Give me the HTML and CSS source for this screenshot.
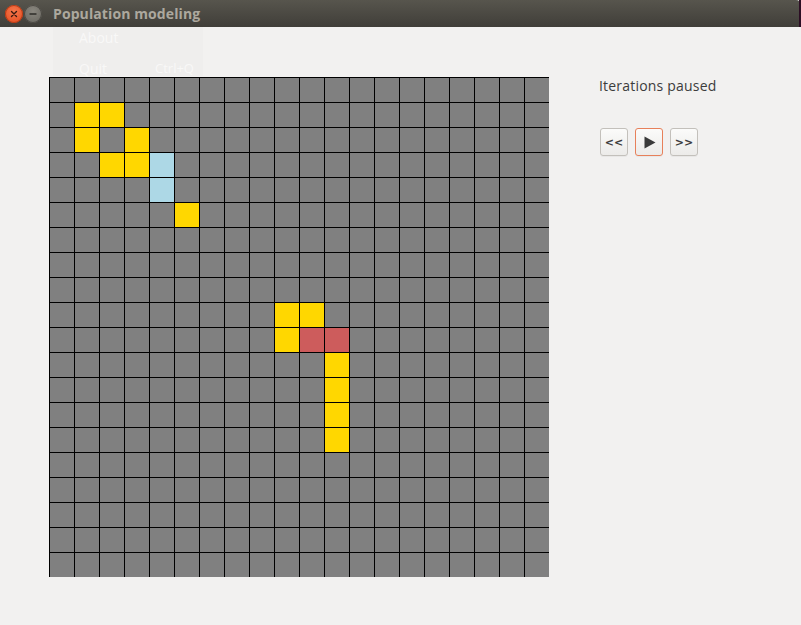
FILE: index.html
```html
<!DOCTYPE html>
<html>
<head>
<meta charset="utf-8">
<title>Population modeling</title>
<link rel="stylesheet" href="styles.css">
</head>
<body>
<div class="window">
  <div class="titlebar">
    <div class="wbtns">
      <span class="wbtn close"><svg width="8" height="8" viewBox="0 0 8 8"><path d="M1.5 1.5L6.5 6.5M6.5 1.5L1.5 6.5" stroke="#3a1a10" stroke-width="1.4" stroke-linecap="round"/></svg></span>
      <span class="wbtn min"><svg width="8" height="8" viewBox="0 0 8 8"><path d="M1 4H7" stroke="#2e2d29" stroke-width="1.4" stroke-linecap="round"/></svg></span>
    </div>
    <div class="title">Population modeling</div>
    <div class="edge"></div>
  </div>
  <div class="content">
    <div class="ghost-menu">
      <div class="gm-item">About</div>
      <div class="gm-item"><span>Quit</span><span class="gm-acc">Ctrl+Q</span></div>
    </div>
    <div class="grid">
<i></i><i></i><i></i><i></i><i></i><i></i><i></i><i></i><i></i><i></i><i></i><i></i><i></i><i></i><i></i><i></i><i></i><i></i><i></i><i></i>
<i></i><i class="y"></i><i class="y"></i><i></i><i></i><i></i><i></i><i></i><i></i><i></i><i></i><i></i><i></i><i></i><i></i><i></i><i></i><i></i><i></i><i></i>
<i></i><i class="y"></i><i></i><i class="y"></i><i></i><i></i><i></i><i></i><i></i><i></i><i></i><i></i><i></i><i></i><i></i><i></i><i></i><i></i><i></i><i></i>
<i></i><i></i><i class="y"></i><i class="y"></i><i class="b"></i><i></i><i></i><i></i><i></i><i></i><i></i><i></i><i></i><i></i><i></i><i></i><i></i><i></i><i></i><i></i>
<i></i><i></i><i></i><i></i><i class="b"></i><i></i><i></i><i></i><i></i><i></i><i></i><i></i><i></i><i></i><i></i><i></i><i></i><i></i><i></i><i></i>
<i></i><i></i><i></i><i></i><i></i><i class="y"></i><i></i><i></i><i></i><i></i><i></i><i></i><i></i><i></i><i></i><i></i><i></i><i></i><i></i><i></i>
<i></i><i></i><i></i><i></i><i></i><i></i><i></i><i></i><i></i><i></i><i></i><i></i><i></i><i></i><i></i><i></i><i></i><i></i><i></i><i></i>
<i></i><i></i><i></i><i></i><i></i><i></i><i></i><i></i><i></i><i></i><i></i><i></i><i></i><i></i><i></i><i></i><i></i><i></i><i></i><i></i>
<i></i><i></i><i></i><i></i><i></i><i></i><i></i><i></i><i></i><i></i><i></i><i></i><i></i><i></i><i></i><i></i><i></i><i></i><i></i><i></i>
<i></i><i></i><i></i><i></i><i></i><i></i><i></i><i></i><i></i><i class="y"></i><i class="y"></i><i></i><i></i><i></i><i></i><i></i><i></i><i></i><i></i><i></i>
<i></i><i></i><i></i><i></i><i></i><i></i><i></i><i></i><i></i><i class="y"></i><i class="r"></i><i class="r"></i><i></i><i></i><i></i><i></i><i></i><i></i><i></i><i></i>
<i></i><i></i><i></i><i></i><i></i><i></i><i></i><i></i><i></i><i></i><i></i><i class="y"></i><i></i><i></i><i></i><i></i><i></i><i></i><i></i><i></i>
<i></i><i></i><i></i><i></i><i></i><i></i><i></i><i></i><i></i><i></i><i></i><i class="y"></i><i></i><i></i><i></i><i></i><i></i><i></i><i></i><i></i>
<i></i><i></i><i></i><i></i><i></i><i></i><i></i><i></i><i></i><i></i><i></i><i class="y"></i><i></i><i></i><i></i><i></i><i></i><i></i><i></i><i></i>
<i></i><i></i><i></i><i></i><i></i><i></i><i></i><i></i><i></i><i></i><i></i><i class="y"></i><i></i><i></i><i></i><i></i><i></i><i></i><i></i><i></i>
<i></i><i></i><i></i><i></i><i></i><i></i><i></i><i></i><i></i><i></i><i></i><i></i><i></i><i></i><i></i><i></i><i></i><i></i><i></i><i></i>
<i></i><i></i><i></i><i></i><i></i><i></i><i></i><i></i><i></i><i></i><i></i><i></i><i></i><i></i><i></i><i></i><i></i><i></i><i></i><i></i>
<i></i><i></i><i></i><i></i><i></i><i></i><i></i><i></i><i></i><i></i><i></i><i></i><i></i><i></i><i></i><i></i><i></i><i></i><i></i><i></i>
<i></i><i></i><i></i><i></i><i></i><i></i><i></i><i></i><i></i><i></i><i></i><i></i><i></i><i></i><i></i><i></i><i></i><i></i><i></i><i></i>
<i></i><i></i><i></i><i></i><i></i><i></i><i></i><i></i><i></i><i></i><i></i><i></i><i></i><i></i><i></i><i></i><i></i><i></i><i></i><i></i>
    </div>
    <div class="side">
      <div class="status">Iterations paused</div>
      <div class="controls">
        <button class="btn">&lt;&lt;</button>
        <button class="btn play"><svg width="13" height="13" viewBox="0 0 13 13"><path d="M1.5 0.5L12.5 6.5L1.5 12.5Z" fill="#3a3a3a"/></svg></button>
        <button class="btn">&gt;&gt;</button>
      </div>
    </div>
  </div>
</div>
</body>
</html>
```
FILE: styles.css
```css
html, body {
  margin: 0;
  padding: 0;
  background: #f2f1f0;
}
.window {
  width: 801px;
  height: 625px;
  display: flex;
  flex-direction: column;
  background: #f2f1f0;
  font-family: "Open Sans", "Noto Sans", sans-serif;
}
.titlebar {
  height: 27px;
  flex: none;
  display: flex;
  align-items: center;
  background: linear-gradient(#57554d, #403e39);
  border-top-right-radius: 5px;
  position: relative;
}
.wbtns {
  display: flex;
  gap: 1px;
  padding-left: 5px;
  width: 48px;
  flex: none;
}
.wbtn {
  width: 18px;
  height: 18px;
  border-radius: 50%;
  display: flex;
  align-items: center;
  justify-content: center;
}
.wbtn.close {
  background: radial-gradient(circle at 50% 35%, #f6784c, #e2481c);
  box-shadow: inset 0 0 0 1px #b53a15;
}
.wbtn.min {
  background: radial-gradient(circle at 50% 35%, #8a877f, #66645d);
  box-shadow: inset 0 0 0 1px #4a4843;
}
.title {
  font-weight: bold;
  font-size: 14px;
  color: #aca89e;
  letter-spacing: 0.1px;
}
.edge {
  position: absolute;
  right: 0;
  top: 0;
  width: 2px;
  height: 27px;
  background: #2c0e24;
}
.content {
  flex: 1;
  display: flex;
  align-items: flex-start;
  padding: 50px 0 0 49px;
  gap: 50px;
  position: relative;
}
.ghost-menu {
  position: absolute;
  left: 53px;
  top: 0;
  width: 150px;
  height: 49px;
  background: #efeeed;
  font-size: 14px;
  color: rgba(255, 255, 255, 0.6);
}
.gm-item {
  height: 20px;
  display: flex;
  align-items: center;
  padding-left: 26px;
  gap: 48px;
}
.gm-item:first-child {
  margin-top: 0;
  margin-bottom: 11px;
}
.gm-acc {
  font-size: 13px;
}
.grid {
  display: grid;
  grid-template-columns: repeat(20, 25px);
  grid-auto-rows: 25px;
  width: 500px;
  position: relative;
}
.grid i {
  display: block;
  box-sizing: border-box;
  border-top: 1px solid #000;
  border-left: 1px solid #000;
  background: #808080;
}
.grid i.y { background: #ffd700; }
.grid i.b { background: #add8e6; }
.grid i.r { background: #cd5c5c; }
.side {
  display: flex;
  flex-direction: column;
}
.status {
  font-size: 14px;
  color: #3c3c3c;
  line-height: 17px;
  letter-spacing: 0.2px;
}
.controls {
  display: flex;
  gap: 7px;
  margin-top: 34px;
  margin-left: 1px;
}
.btn {
  width: 28px;
  height: 28px;
  box-sizing: border-box;
  padding: 0;
  border: 1px solid #c3c0bb;
  border-radius: 3px;
  background: linear-gradient(#fbfbfa, #ecebe9);
  font-family: "DejaVu Sans", sans-serif;
  font-size: 11px;
  font-weight: bold;
  color: #3c3c3c;
  display: flex;
  align-items: center;
  justify-content: center;
  box-shadow: 0 1px 0 rgba(0,0,0,0.04);
}
.btn.play {
  border-color: #e7805a;
}
```
